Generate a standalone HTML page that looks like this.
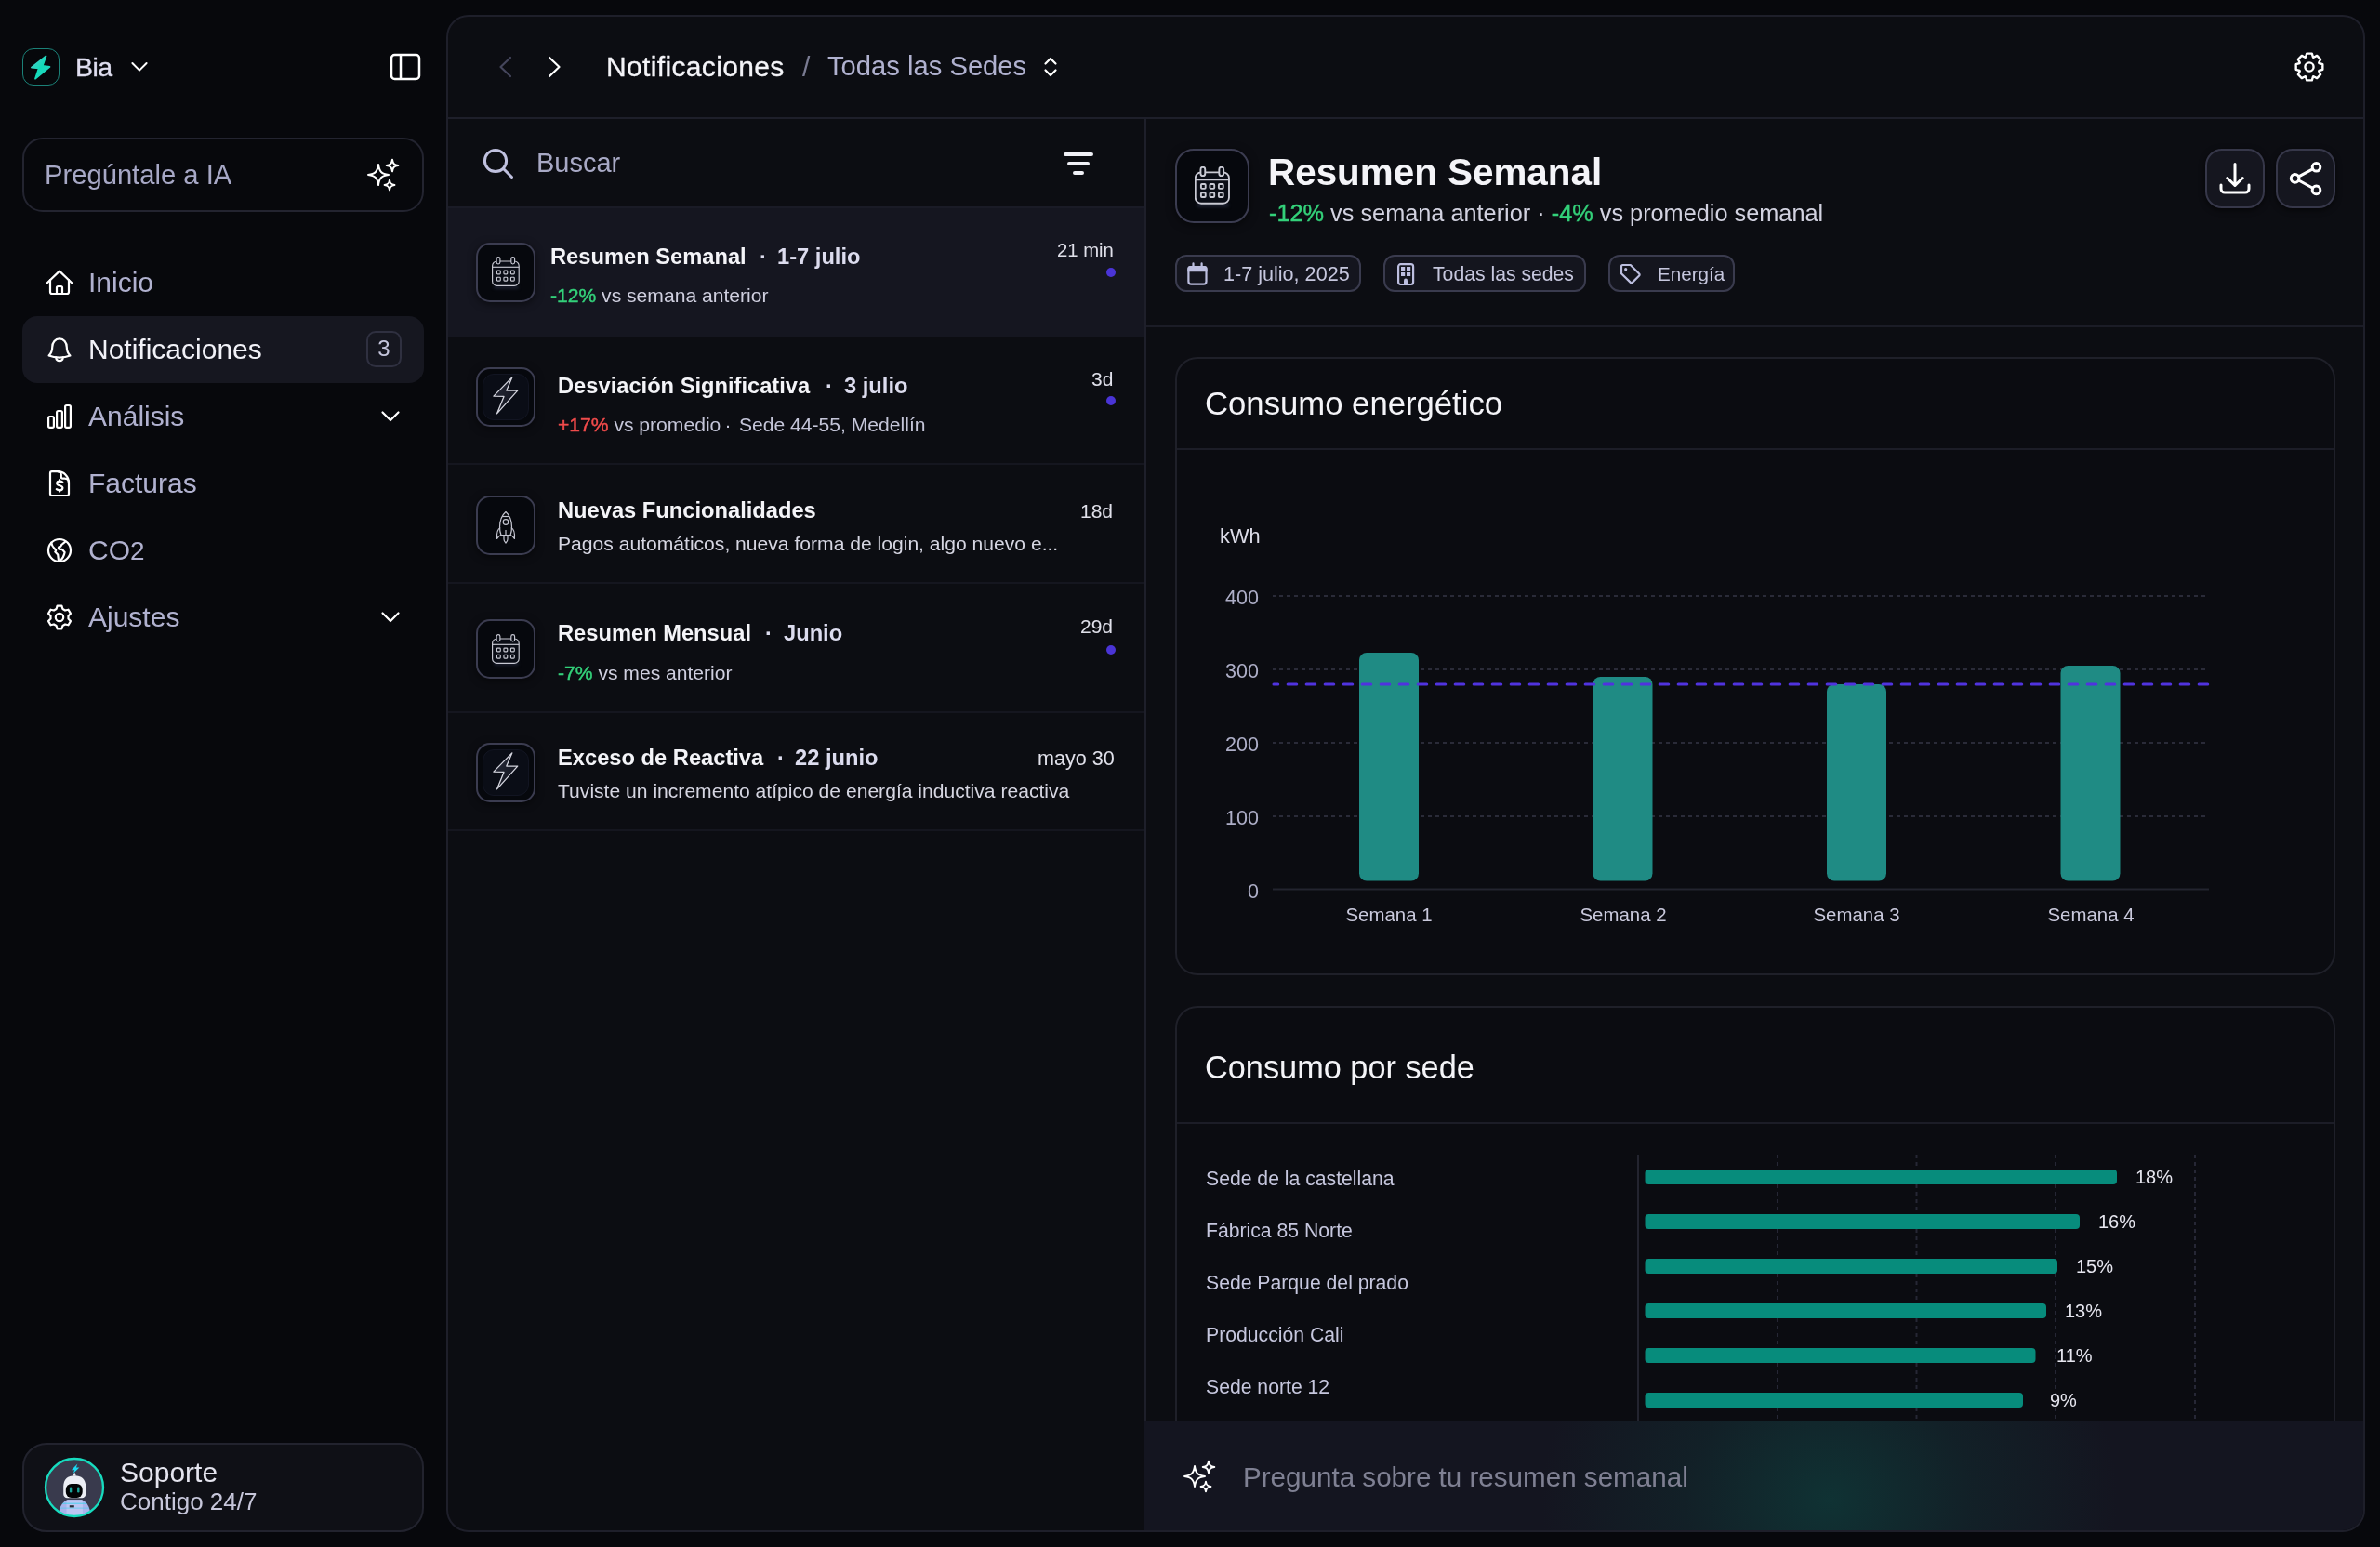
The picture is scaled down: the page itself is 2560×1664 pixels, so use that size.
<!DOCTYPE html>
<html><head><meta charset="utf-8"><style>*{margin:0;padding:0}
html,body{width:2560px;height:1664px;overflow:hidden;background:#07080c;font-family:"Liberation Sans",sans-serif}
.r{position:absolute}
.t{position:absolute;white-space:nowrap;will-change:transform}
.pc{-webkit-text-stroke:0.45px currentColor}
#panel{position:absolute;left:480px;top:16px;width:2064px;height:1632px;border:2px solid #1e1f2a;border-radius:24px;box-sizing:border-box;background:#0c0d12;overflow:hidden}
#clip{position:absolute;left:0;top:0;width:2560px;height:1664px;clip-path:inset(18px 18px 18px 482px round 22px)}
</style></head>
<body>
<div class="r" style="left:24px;top:52px;width:40px;height:40px;border:1.6px solid #1b8178;border-radius:12px;box-sizing:border-box;background:#06080b"></div>
<svg class="r" style="left:24px;top:52px;" width="40" height="40" viewBox="0 0 40 40" fill="none"><defs><linearGradient id="lg" x1="0" y1="0" x2="1" y2="1"><stop offset="0" stop-color="#5cc7cf"/><stop offset="0.5" stop-color="#12dcb9"/><stop offset="1" stop-color="#2ad4c4"/></linearGradient></defs><path d="M25.6 8.2 L9.8 20.6 L17.6 21.4 L13.9 32.8 L29.6 19.9 L21.8 18.9 Z" fill="url(#lg)" stroke="url(#lg)" stroke-width="1.6" stroke-linejoin="round"/></svg>
<div class="t " style="left:80.5px;top:58.07px;font-size:28.5px;line-height:28.5px;color:#dfdef0;letter-spacing:-0.6px;-webkit-text-stroke:0.35px #dfdef0;">Bia</div>
<svg class="r" style="left:136px;top:60px;" width="28" height="24" viewBox="0 0 28 24" fill="none"><path d="M6.4 8 L14 15.6 L21.6 8" stroke="#fff" stroke-width="2" stroke-linecap="round" stroke-linejoin="round"/></svg>
<svg class="r" style="left:416px;top:54px;" width="40" height="36" viewBox="0 0 40 36" fill="none"><rect x="5" y="5" width="30" height="26" rx="3.5" stroke="#fff" stroke-width="2.5"/><path d="M15 5 V31" stroke="#fff" stroke-width="2.5"/></svg>
<div class="r" style="left:24px;top:148px;width:432px;height:80px;border:2px solid #232430;border-radius:22px;box-sizing:border-box"></div>
<div class="t " style="left:48px;top:174.28px;font-size:29.2px;line-height:29.2px;color:#a7a8c6;">Pregúntale a IA</div>
<svg class="r" style="left:388px;top:166px;" width="48" height="44" viewBox="0 0 48 44" fill="none"><g transform="translate(0,0)" stroke="#fff" stroke-width="2" stroke-linejoin="round"><path d="M19 11 C20.078 18.612 22.388 20.922 30 22 C22.388 23.078 20.078 25.388 19 33 C17.922 25.388 15.612 23.078 8 22 C15.612 20.922 17.922 18.612 19 11 Z"/><path d="M34 5.7 C34.6174 10.0596 35.9404 11.3826 40.3 12 C35.9404 12.6174 34.6174 13.9404 34 18.3 C33.3826 13.9404 32.0596 12.6174 27.7 12 C32.0596 11.3826 33.3826 10.0596 34 5.7 Z"/><path d="M31 27.6 C31.5292 31.3368 32.6632 32.4708 36.4 33 C32.6632 33.5292 31.5292 34.6632 31 38.4 C30.4708 34.6632 29.3368 33.5292 25.6 33 C29.3368 32.4708 30.4708 31.3368 31 27.6 Z"/></g></svg>
<div class="r" style="left:24px;top:340px;width:432px;height:72px;background:#161720;border-radius:16px"></div>
<svg class="r" style="left:48px;top:288px;" width="32" height="32" viewBox="0 0 32 32" fill="none"><g stroke="#fff" stroke-width="2.2" stroke-linecap="round" stroke-linejoin="round"><path d="M2.8 16.2 L16 3.6 L29.2 16.2"/><path d="M6 13 V26 a2 2 0 0 0 2 2 H24 a2 2 0 0 0 2 -2 V13"/><path d="M13 28 V21.5 a1.5 1.5 0 0 1 1.5 -1.5 h3 a1.5 1.5 0 0 1 1.5 1.5 V28"/></g></svg>
<div class="t " style="left:95.3px;top:289.21px;font-size:30px;line-height:30px;color:#b0b1cf;">Inicio</div>
<svg class="r" style="left:48px;top:360px;" width="32" height="32" viewBox="0 0 32 32" fill="none"><g stroke="#fff" stroke-width="2.2" stroke-linecap="round" stroke-linejoin="round"><path d="M8.2 13.5 C8.2 8.5 11.5 4.4 16 4.4 C20.5 4.4 23.8 8.5 23.8 13.5 C23.8 17.5 24.8 19.8 27.4 22.6 C23.5 24.2 19.8 24.6 16 24.6 C12.2 24.6 8.5 24.2 4.6 22.6 C7.2 19.8 8.2 17.5 8.2 13.5 Z"/><path d="M12.2 24.4 C12.4 26.6 14 28.2 16 28.2 C18 28.2 19.6 26.6 19.8 24.4"/></g></svg>
<div class="t " style="left:95.3px;top:361.21px;font-size:30px;line-height:30px;color:#f2f2f8;">Notificaciones</div>
<svg class="r" style="left:48px;top:432px;" width="32" height="32" viewBox="0 0 32 32" fill="none"><g stroke="#fff" stroke-width="2.2" stroke-linejoin="round"><rect x="4.1" y="16" width="5.8" height="11.8" rx="1.6"/><rect x="13.1" y="10" width="5.8" height="17.8" rx="1.6"/><rect x="22.1" y="4" width="5.8" height="23.8" rx="1.6"/></g></svg>
<div class="t " style="left:95.3px;top:433.21px;font-size:30px;line-height:30px;color:#b0b1cf;">Análisis</div>
<svg class="r" style="left:48px;top:504px;" width="32" height="32" viewBox="0 0 32 32" fill="none"><g stroke="#fff" stroke-width="2.2" stroke-linecap="round" stroke-linejoin="round"><path d="M6 5 a1.8 1.8 0 0 1 1.8 -1.8 H14 a11.8 11.8 0 0 1 12 12 V27.2 a1.8 1.8 0 0 1 -1.8 1.8 H7.8 a1.8 1.8 0 0 1 -1.8 -1.8 Z"/><path d="M14.6 3.4 a3.2 3.2 0 0 1 3.2 3.2 V9 a1.6 1.6 0 0 0 1.6 1.6 H21.5 a4.4 4.4 0 0 1 4.4 4.4"/><path d="M19.3 14.6 C18.4 13.9 17.3 13.6 16.2 13.6 C14.4 13.6 13.2 14.5 13.2 15.9 C13.2 18.9 19.4 17.6 19.4 20.8 C19.4 22.3 18 23.3 16.1 23.3 C14.8 23.3 13.6 22.9 12.8 22.2"/><path d="M16.1 12.2 V13.6 M16.1 23.3 V24.7"/></g></svg>
<div class="t " style="left:95.3px;top:505.21px;font-size:30px;line-height:30px;color:#b0b1cf;">Facturas</div>
<svg class="r" style="left:48px;top:576px;" width="32" height="32" viewBox="0 0 32 32" fill="none"><g stroke="#fff" stroke-width="2.2" stroke-linecap="round" stroke-linejoin="round"><circle cx="16" cy="16" r="12"/><path d="M7.2 7.6 C7.6 10 8.6 12 10.4 13.8 L12.2 16 L11.3 17.6 L14.2 20.6 L15 27.2 L16.2 27.6 C19.2 25 21 21.6 21.6 18 L18.6 14.8 L16.2 14.8 C15 14.8 14.4 13.2 15.4 12.2 L17.4 11.6 L18.2 10 C19.6 8.6 21.2 7.6 22.4 6.4"/></g></svg>
<div class="t " style="left:95.3px;top:577.21px;font-size:30px;line-height:30px;color:#b0b1cf;">CO<span style="font-size:0.93em">2</span></div>
<svg class="r" style="left:48px;top:648px;" width="32" height="32" viewBox="0 0 32 32" fill="none"><g stroke="#fff" stroke-width="2.2" stroke-linejoin="round"><path d="M12.56 7.04 L13.60 3.63 L18.40 3.63 L19.44 7.04 L22.04 8.54 L25.51 7.73 L27.91 11.90 L25.48 14.50 L25.48 17.50 L27.91 20.10 L25.51 24.27 L22.04 23.46 L19.44 24.96 L18.40 28.37 L13.60 28.37 L12.56 24.96 L9.96 23.46 L6.49 24.27 L4.09 20.10 L6.52 17.50 L6.52 14.50 L4.09 11.90 L6.49 7.73 L9.96 8.54 Z"/><circle cx="16" cy="16" r="4.2"/></g></svg>
<div class="t " style="left:95.3px;top:649.21px;font-size:30px;line-height:30px;color:#b0b1cf;">Ajustes</div>
<div class="r" style="left:394px;top:356px;width:38px;height:39px;border:2px solid #2f3040;border-radius:10px;box-sizing:border-box"></div>
<div class="t " style="left:413px;transform:translateX(-50%);top:363.18px;font-size:24px;line-height:24px;color:#c4c5dc;">3</div>
<svg class="r" style="left:404px;top:436px;" width="32" height="24" viewBox="0 0 32 24" fill="none"><path d="M7.5 7.5 L16 16 L24.5 7.5" stroke="#fff" stroke-width="2.2" stroke-linecap="round" stroke-linejoin="round"/></svg>
<svg class="r" style="left:404px;top:652px;" width="32" height="24" viewBox="0 0 32 24" fill="none"><path d="M7.5 7.5 L16 16 L24.5 7.5" stroke="#fff" stroke-width="2.2" stroke-linecap="round" stroke-linejoin="round"/></svg>
<div class="r" style="left:24px;top:1552px;width:432px;height:96px;border:2px solid #22232e;border-radius:26px;box-sizing:border-box;background:#0f1016"></div>
<svg class="r" style="left:46px;top:1566px;" width="68" height="68" viewBox="0 0 68 68" fill="none"><defs><clipPath id="rc"><circle cx="34" cy="34" r="30.5"/></clipPath></defs><circle cx="34" cy="34" r="31" fill="#393a4d"/><g clip-path="url(#rc)"><clipPath id="bd"><path d="M16.5 70 C16.5 54 22 48.5 27 47.2 L41.5 47.2 C46.5 48.5 52 54 52 70 Z"/></clipPath><g clip-path="url(#bd)"><rect x="10" y="46" width="48" height="30" fill="#a9b3ec"/><rect x="25.5" y="46.6" width="17.4" height="24" fill="#bcc6f3"/><rect x="10" y="50.6" width="48" height="1.3" fill="#3fd3ee" opacity="0.7"/><rect x="10" y="55.6" width="48" height="1.1" fill="#3fd3ee" opacity="0.55"/></g><rect x="28.8" y="53.2" width="5" height="2.2" fill="#2a2c38"/><path d="M22.2 33 C22.2 25 27 21.3 34.2 21.3 C41.4 21.3 46.2 25 46.2 33 V41 C46.2 43.5 44.5 45.2 42 45.2 H26.4 C23.9 45.2 22.2 43.5 22.2 41 Z" fill="#eceef5"/><rect x="24.8" y="30.1" width="17.9" height="15" rx="6" fill="#020305"/><rect x="28.9" y="33.4" width="2.4" height="6" rx="1.2" fill="#1aa39a"/><rect x="37.1" y="33.4" width="2.4" height="6" rx="1.2" fill="#1aa39a"/><path d="M32.6 21.6 L34.2 17.6 L35.8 21.6 Z" fill="#e8eaf2"/><path d="M37.4 8.6 L30.8 15.2 L34.2 15.2 L32.6 19 L39.4 12.4 L35.9 12.4 Z" fill="#19d8f2"/></g><circle cx="34" cy="34" r="31" stroke="#17dcbf" stroke-width="2.3"/></svg>
<div class="t " style="left:128.5px;top:1568.61px;font-size:30px;line-height:30px;color:#e4e4ee;">Soporte</div>
<div class="t " style="left:128.5px;top:1602.49px;font-size:26px;line-height:26px;color:#c6c6da;">Contigo 24/7</div>

<div id="panel"></div>
<div id="clip">
<svg class="r" style="left:528px;top:52px;" width="32" height="40" viewBox="0 0 32 40" fill="none"><path d="M21 10 L10.5 20 L21 30" stroke="#44455b" stroke-width="2.2" stroke-linecap="round" stroke-linejoin="round"/></svg>
<svg class="r" style="left:580px;top:52px;" width="32" height="40" viewBox="0 0 32 40" fill="none"><path d="M11 10 L21.5 20 L11 30" stroke="#fff" stroke-width="2.2" stroke-linecap="round" stroke-linejoin="round"/></svg>
<div class="t " style="left:651.5px;top:56.61px;font-size:30px;line-height:30px;color:#f4f4f8;letter-spacing:0.35px;-webkit-text-stroke:0.3px #f4f4f8;">Notificaciones</div>
<div class="t " style="left:863px;top:56.61px;font-size:30px;line-height:30px;color:#7a7b92;">/</div>
<div class="t " style="left:890px;top:57.28px;font-size:29.2px;line-height:29.2px;color:#b0b1cf;">Todas las Sedes</div>
<svg class="r" style="left:1118px;top:56px;" width="24" height="32" viewBox="0 0 24 32" fill="none"><path d="M6.5 12.5 L12 7 L17.5 12.5 M6.5 19.5 L12 25 L17.5 19.5" stroke="#fff" stroke-width="2.2" stroke-linecap="round" stroke-linejoin="round"/></svg>
<svg class="r" style="left:2468px;top:56px;" width="32" height="32" viewBox="0 0 32 32" fill="none"><g stroke="#fff" stroke-width="2.4" stroke-linejoin="round"><path d="M11.99 5.54 L13.21 1.67 L18.79 1.67 L20.01 5.54 L20.56 5.77 L24.16 3.90 L28.10 7.84 L26.23 11.44 L26.46 11.99 L30.33 13.21 L30.33 18.79 L26.46 20.01 L26.23 20.56 L28.10 24.16 L24.16 28.10 L20.56 26.23 L20.01 26.46 L18.79 30.33 L13.21 30.33 L11.99 26.46 L11.44 26.23 L7.84 28.10 L3.90 24.16 L5.77 20.56 L5.54 20.01 L1.67 18.79 L1.67 13.21 L5.54 11.99 L5.77 11.44 L3.90 7.84 L7.84 3.90 L11.44 5.77 Z"/><circle cx="16" cy="16" r="4.6"/></g></svg>
<div class="r" style="left:482px;top:126px;width:2060px;height:2px;background:#1e1f2a"></div>
<div class="r" style="left:1231px;top:128px;width:2px;height:1520px;background:#1e1f2a"></div>
<svg class="r" style="left:512px;top:152px;" width="48" height="48" viewBox="0 0 48 48" fill="none"><circle cx="21" cy="21" r="11.6" stroke="#c0c1df" stroke-width="3"/><path d="M29.5 29.5 L38.5 38.5" stroke="#c0c1df" stroke-width="3" stroke-linecap="round"/></svg>
<div class="t " style="left:577px;top:161.15px;font-size:29px;line-height:29px;color:#a8a9c5;">Buscar</div>
<svg class="r" style="left:1140px;top:156px;" width="40" height="40" viewBox="0 0 40 40" fill="none"><path d="M6 10 H34 M10 20 H30 M16 30 H24" stroke="#f0f0f6" stroke-width="4" stroke-linecap="round"/></svg>
<div class="r" style="left:482px;top:222px;width:749px;height:140px;background:#151620"></div>
<div class="r" style="left:482px;top:222px;width:749px;height:2px;background:#1a1b26"></div>
<div class="r" style="left:482px;top:498px;width:749px;height:2px;background:#15161f"></div>
<div class="r" style="left:482px;top:626px;width:749px;height:2px;background:#15161f"></div>
<div class="r" style="left:482px;top:765px;width:749px;height:2px;background:#15161f"></div>
<div class="r" style="left:482px;top:892px;width:749px;height:2px;background:#15161f"></div>
<div class="r" style="left:512px;top:261px;width:64px;height:64px;border:2px solid #3b3c50;border-radius:15px;box-sizing:border-box;background:#06080d;box-shadow:0 2px 8px rgba(0,0,0,0.5)"></div>
<div class="r" style="left:530.5px;top:306.90000000000003px;width:27px;height:4.2px;background:#171b2a;border-radius:3px;filter:blur(1.6px)"></div>
<svg class="r" style="left:529px;top:276.3px;" width="30" height="32.0" viewBox="0 0 30 32" fill="none"><g stroke="#c9cad4" stroke-width="1.15" stroke-linejoin="round"><rect x="0.6" y="5" width="28.6" height="26.4" rx="5" fill="#0a0d16"/><path d="M0.6 11.3 H29.2"/><rect x="5.1" y="0.6" width="3.8" height="7.4" rx="1.9" fill="#0a0d16"/><rect x="20.8" y="0.6" width="3.8" height="7.4" rx="1.9" fill="#0a0d16"/><rect x="5.45" y="15.05" width="3.8" height="3.8" rx="0.8"/><rect x="12.95" y="15.05" width="3.8" height="3.8" rx="0.8"/><rect x="20.45" y="15.05" width="3.8" height="3.8" rx="0.8"/><rect x="5.45" y="22.25" width="3.8" height="3.8" rx="0.8"/><rect x="12.95" y="22.25" width="3.8" height="3.8" rx="0.8"/><rect x="20.45" y="22.25" width="3.8" height="3.8" rx="0.8"/></g></svg>
<div class="t " style="left:592px;top:265.14px;font-size:23.7px;line-height:23.7px;color:#f4f4f8;font-weight:700;">Resumen Semanal</div>
<div class="t " style="left:820.7px;transform:translateX(-50%);top:265.14px;font-size:23.7px;line-height:23.7px;color:#dcdcee;font-weight:700;">·</div>
<div class="t " style="left:836px;top:265.14px;font-size:23.7px;line-height:23.7px;color:#dcdcee;font-weight:700;">1-7 julio</div>
<div class="t " style="left:592px;top:306.94px;font-size:21.1px;line-height:21.1px;color:#cfcfdf;"><span class="pc" style="color:#34d17a">-12%</span> vs semana anterior</div>
<div class="t " style="right:1362.5px;top:259.42px;font-size:20.3px;line-height:20.3px;color:#e0e0ea;">21 min</div>
<div class="r" style="left:1190px;top:288px;width:10px;height:10px;border-radius:50%;background:#4a34d6"></div>
<div class="r" style="left:512px;top:395px;width:64px;height:64px;border:2px solid #3b3c50;border-radius:15px;box-sizing:border-box;background:#06080d;box-shadow:0 2px 8px rgba(0,0,0,0.5)"></div>
<div class="r" style="left:519px;top:402px;width:50px;height:50px;border-radius:12px;background:#0a0d16;border:1px solid #121522;box-sizing:border-box"></div>
<svg class="r" style="left:528px;top:404px;" width="32" height="44" viewBox="0 0 32 44" fill="none"><defs><linearGradient id="bg2" x1="0" y1="0" x2="1" y2="1"><stop offset="0" stop-color="#2a2d3c"/><stop offset="1" stop-color="#0d0f18"/></linearGradient></defs><path d="M22.8 1.9 L2.9 22.1 L14 22.4 L6.5 40.9 L28.7 16.1 L16.8 16 Z" fill="url(#bg2)" stroke="#d4d5de" stroke-width="1.3" stroke-linejoin="round"/></svg>
<div class="t " style="left:600px;top:403.94px;font-size:23.7px;line-height:23.7px;color:#f4f4f8;font-weight:700;">Desviación Significativa</div>
<div class="t " style="left:892.4px;transform:translateX(-50%);top:403.94px;font-size:23.7px;line-height:23.7px;color:#dcdcee;font-weight:700;">·</div>
<div class="t " style="left:908px;top:403.94px;font-size:23.7px;line-height:23.7px;color:#dcdcee;font-weight:700;">3 julio</div>
<div class="t " style="left:600px;top:446.14px;font-size:21.1px;line-height:21.1px;color:#c4c5d8;"><span class="pc" style="color:#f04b4b">+17%</span> vs promedio</div>
<div class="t " style="left:782.5px;transform:translateX(-50%);top:446.14px;font-size:21.1px;line-height:21.1px;color:#c4c5d8;">·</div>
<div class="t " style="left:794.5px;top:446.14px;font-size:21.1px;line-height:21.1px;color:#c4c5d8;">Sede 44-55, Medellín</div>
<div class="t " style="right:1362.5px;top:397.22px;font-size:21px;line-height:21px;color:#e0e0ea;">3d</div>
<div class="r" style="left:1190px;top:426px;width:10px;height:10px;border-radius:50%;background:#4a34d6"></div>
<div class="r" style="left:512px;top:533px;width:64px;height:64px;border:2px solid #3b3c50;border-radius:15px;box-sizing:border-box;background:#06080d;box-shadow:0 2px 8px rgba(0,0,0,0.5)"></div>
<svg class="r" style="left:532px;top:549px;" width="24" height="36" viewBox="0 0 24 36" fill="none"><g stroke="#c4c5d0" stroke-width="1.2" stroke-linejoin="round" fill="none"><path d="M12 1.5 C8 5 5.5 11 5.5 18 C5.5 21.5 6 24 7 26.5 H17 C18 24 18.5 21.5 18.5 18 C18.5 11 16 5 12 1.5 Z"/><path d="M8.2 6.5 H15.8"/><circle cx="12" cy="12.5" r="2.8"/><path d="M6.2 18.5 C3 20 2 23 2.6 30.5 C4 28 5.5 26.8 7.2 26.4"/><path d="M17.8 18.5 C21 20 22 23 21.4 30.5 C20 28 18.5 26.8 16.8 26.4"/><path d="M10 26.5 V31 C10 32.5 11 34 12 35 C13 34 14 32.5 14 31 V26.5"/><path d="M12 21 V26.5"/></g></svg>
<div class="t " style="left:600px;top:537.74px;font-size:23.7px;line-height:23.7px;color:#f4f4f8;font-weight:700;">Nuevas Funcionalidades</div>
<div class="t " style="left:600px;top:573.54px;font-size:21.1px;line-height:21.1px;color:#d6d6e2;">Pagos automáticos, nueva forma de login, algo nuevo e...</div>
<div class="t " style="right:1362.5px;top:539.22px;font-size:21px;line-height:21px;color:#e0e0ea;">18d</div>
<div class="r" style="left:512px;top:666px;width:64px;height:64px;border:2px solid #3b3c50;border-radius:15px;box-sizing:border-box;background:#06080d;box-shadow:0 2px 8px rgba(0,0,0,0.5)"></div>
<div class="r" style="left:530.5px;top:712.1px;width:27px;height:4.2px;background:#171b2a;border-radius:3px;filter:blur(1.6px)"></div>
<svg class="r" style="left:529px;top:681.5px;" width="30" height="32.0" viewBox="0 0 30 32" fill="none"><g stroke="#c9cad4" stroke-width="1.15" stroke-linejoin="round"><rect x="0.6" y="5" width="28.6" height="26.4" rx="5" fill="#0a0d16"/><path d="M0.6 11.3 H29.2"/><rect x="5.1" y="0.6" width="3.8" height="7.4" rx="1.9" fill="#0a0d16"/><rect x="20.8" y="0.6" width="3.8" height="7.4" rx="1.9" fill="#0a0d16"/><rect x="5.45" y="15.05" width="3.8" height="3.8" rx="0.8"/><rect x="12.95" y="15.05" width="3.8" height="3.8" rx="0.8"/><rect x="20.45" y="15.05" width="3.8" height="3.8" rx="0.8"/><rect x="5.45" y="22.25" width="3.8" height="3.8" rx="0.8"/><rect x="12.95" y="22.25" width="3.8" height="3.8" rx="0.8"/><rect x="20.45" y="22.25" width="3.8" height="3.8" rx="0.8"/></g></svg>
<div class="t " style="left:600px;top:670.44px;font-size:23.7px;line-height:23.7px;color:#f4f4f8;font-weight:700;">Resumen Mensual</div>
<div class="t " style="left:827px;transform:translateX(-50%);top:670.44px;font-size:23.7px;line-height:23.7px;color:#dcdcee;font-weight:700;">·</div>
<div class="t " style="left:842.5px;top:670.44px;font-size:23.7px;line-height:23.7px;color:#dcdcee;font-weight:700;">Junio</div>
<div class="t " style="left:600px;top:712.84px;font-size:21.1px;line-height:21.1px;color:#cfcfdf;"><span class="pc" style="color:#34d17a">-7%</span> vs mes anterior</div>
<div class="t " style="right:1362.5px;top:663.22px;font-size:21px;line-height:21px;color:#e0e0ea;">29d</div>
<div class="r" style="left:1190px;top:693.5px;width:10px;height:10px;border-radius:50%;background:#4a34d6"></div>
<div class="r" style="left:512px;top:799px;width:64px;height:64px;border:2px solid #3b3c50;border-radius:15px;box-sizing:border-box;background:#06080d;box-shadow:0 2px 8px rgba(0,0,0,0.5)"></div>
<div class="r" style="left:519px;top:806px;width:50px;height:50px;border-radius:12px;background:#0a0d16;border:1px solid #121522;box-sizing:border-box"></div>
<svg class="r" style="left:528px;top:808px;" width="32" height="44" viewBox="0 0 32 44" fill="none"><defs><linearGradient id="bg2" x1="0" y1="0" x2="1" y2="1"><stop offset="0" stop-color="#2a2d3c"/><stop offset="1" stop-color="#0d0f18"/></linearGradient></defs><path d="M22.8 1.9 L2.9 22.1 L14 22.4 L6.5 40.9 L28.7 16.1 L16.8 16 Z" fill="url(#bg2)" stroke="#d4d5de" stroke-width="1.3" stroke-linejoin="round"/></svg>
<div class="t " style="left:600px;top:803.94px;font-size:23.7px;line-height:23.7px;color:#f4f4f8;font-weight:700;">Exceso de Reactiva</div>
<div class="t " style="left:839.7px;transform:translateX(-50%);top:803.94px;font-size:23.7px;line-height:23.7px;color:#dcdcee;font-weight:700;">·</div>
<div class="t " style="left:855px;top:803.94px;font-size:23.7px;line-height:23.7px;color:#dcdcee;font-weight:700;">22 junio</div>
<div class="t " style="left:600px;top:839.54px;font-size:21.1px;line-height:21.1px;color:#d6d6e2;">Tuviste un incremento atípico de energía inductiva reactiva</div>
<div class="t " style="right:1361.5px;top:805.22px;font-size:21.6px;line-height:21.6px;color:#e0e0ea;">mayo 30</div>
<div class="r" style="left:1264px;top:160px;width:80px;height:80px;border:2px solid #3b3c50;border-radius:20px;box-sizing:border-box;background:#06080d;box-shadow:0 2px 10px rgba(0,0,0,0.5)"></div>
<div class="r" style="left:1286.5px;top:217.76px;width:35px;height:5.32px;background:#171b2a;border-radius:3px;filter:blur(1.6px)"></div>
<svg class="r" style="left:1285px;top:179px;" width="38" height="40.53333333333333" viewBox="0 0 30 32" fill="none"><g stroke="#c9cad4" stroke-width="1.5" stroke-linejoin="round"><rect x="0.6" y="5" width="28.6" height="26.4" rx="5" fill="#0a0d16"/><path d="M0.6 11.3 H29.2"/><rect x="5.1" y="0.6" width="3.8" height="7.4" rx="1.9" fill="#0a0d16"/><rect x="20.8" y="0.6" width="3.8" height="7.4" rx="1.9" fill="#0a0d16"/><rect x="5.45" y="15.05" width="3.8" height="3.8" rx="0.8"/><rect x="12.95" y="15.05" width="3.8" height="3.8" rx="0.8"/><rect x="20.45" y="15.05" width="3.8" height="3.8" rx="0.8"/><rect x="5.45" y="22.25" width="3.8" height="3.8" rx="0.8"/><rect x="12.95" y="22.25" width="3.8" height="3.8" rx="0.8"/><rect x="20.45" y="22.25" width="3.8" height="3.8" rx="0.8"/></g></svg>
<div class="t " style="left:1364px;top:164.60px;font-size:40.4px;line-height:40.4px;color:#f4f4f8;font-weight:700;">Resumen Semanal</div>
<div class="t " style="left:1364.5px;top:216.58px;font-size:25.3px;line-height:25.3px;color:#d2d2e0;"><span class="pc" style="color:#34d17a">-12%</span> vs semana anterior · <span class="pc" style="color:#34d17a">-4%</span> vs promedio semanal</div>
<div class="r" style="left:2372px;top:160px;width:64px;height:64px;border:2px solid #363749;border-radius:18px;box-sizing:border-box;background:#15161f;box-shadow:0 2px 6px rgba(0,0,0,0.6)"></div>
<div class="r" style="left:2448px;top:160px;width:64px;height:64px;border:2px solid #363749;border-radius:18px;box-sizing:border-box;background:#15161f;box-shadow:0 2px 6px rgba(0,0,0,0.6)"></div>
<svg class="r" style="left:2372px;top:160px;" width="64" height="64" viewBox="0 0 64 64" fill="none"><g stroke="#fff" stroke-width="3" stroke-linecap="round" stroke-linejoin="round"><path d="M32 16.5 V39.5 M23.8 31.5 L32 39.5 L40.2 31.5"/><path d="M17 39 V43 a4 4 0 0 0 4 4 H43 a4 4 0 0 0 4 -4 V39"/></g></svg>
<svg class="r" style="left:2448px;top:160px;" width="64" height="64" viewBox="0 0 64 64" fill="none"><g stroke="#fff" stroke-width="3" stroke-linecap="round"><circle cx="43.5" cy="19.8" r="4.3"/><circle cx="20.6" cy="31.9" r="4.3"/><circle cx="43.5" cy="44.4" r="4.3"/><path d="M24.6 29.8 L39.6 21.9 M24.6 34 L39.6 42.3"/></g></svg>
<div class="r" style="left:1264px;top:274px;width:200px;height:40px;border:2px solid #3a3b4e;border-radius:12px;box-sizing:border-box;background:#14151e"></div>
<div class="t " style="left:1316px;top:284.02px;font-size:21.6px;line-height:21.6px;color:#c6c7de;">1-7 julio, 2025</div>
<div class="r" style="left:1488px;top:274px;width:218px;height:40px;border:2px solid #3a3b4e;border-radius:12px;box-sizing:border-box;background:#14151e"></div>
<div class="t " style="left:1540.5px;top:284.35px;font-size:21.2px;line-height:21.2px;color:#c6c7de;">Todas las sedes</div>
<div class="r" style="left:1730px;top:274px;width:136px;height:40px;border:2px solid #3a3b4e;border-radius:12px;box-sizing:border-box;background:#14151e"></div>
<div class="t " style="left:1783px;top:284.86px;font-size:20.6px;line-height:20.6px;color:#c6c7de;">Energía</div>
<svg class="r" style="left:1274px;top:280px;" width="28" height="30" viewBox="0 0 28 30" fill="none"><g stroke="#bdbfe0" stroke-width="2.2" stroke-linejoin="round"><rect x="4.4" y="7.2" width="19.1" height="18.5" rx="3"/><path d="M9.5 3.4 V6.4 M18.6 3.4 V6.4" stroke-linecap="round"/></g><path d="M3.3 12.3 V9.1 a3 3 0 0 1 3 -3 H21.6 a3 3 0 0 1 3 3 V12.3 Z" fill="#bdbfe0"/></svg>
<svg class="r" style="left:1500px;top:280px;" width="24" height="30" viewBox="0 0 24 30" fill="none"><g stroke="#bdbfe0" stroke-width="2.2" stroke-linejoin="round"><rect x="4.1" y="4.2" width="16" height="21.8" rx="2.5"/></g><g fill="#bdbfe0"><rect x="7" y="7" width="4.2" height="4"/><rect x="13" y="7" width="4.2" height="4"/><rect x="7" y="13" width="4.2" height="4"/><rect x="13" y="13" width="4.2" height="4"/><path d="M10 26 V21.6 a2 2 0 0 1 4 0 V26 Z"/></g></svg>
<svg class="r" style="left:1740px;top:280px;" width="28" height="30" viewBox="0 0 28 30" fill="none"><g stroke="#bdbfe0" stroke-width="2.2" stroke-linejoin="round"><path d="M4 6.4 a1.4 1.4 0 0 1 1.4 -1.4 H13.8 L23.2 14.6 a1.3 1.3 0 0 1 0 1.9 L15.8 23.9 a1.3 1.3 0 0 1 -1.9 0 L4 14.2 Z"/></g><circle cx="8.7" cy="9.7" r="1.6" fill="#bdbfe0"/></svg>
<div class="r" style="left:1233px;top:350px;width:1309px;height:2px;background:#1b1c26"></div>
<div class="r" style="left:1264px;top:384px;width:1248px;height:665px;border:2px solid #1f2029;border-radius:24px;box-sizing:border-box;background:#0b0c11"></div>
<div class="r" style="left:1266px;top:482px;width:1244px;height:2px;background:#1c1d27"></div>
<div class="t " style="left:1296px;top:416.63px;font-size:34.7px;line-height:34.7px;color:#f4f4f8;">Consumo energético</div>
<div class="t " style="left:1312px;top:565.55px;font-size:21.8px;line-height:21.8px;color:#dcdce8;">kWh</div>
<div class="t " style="right:1206px;top:633.30px;font-size:21.5px;line-height:21.5px;color:#aeafc8;">400</div>
<div class="t " style="right:1206px;top:712.30px;font-size:21.5px;line-height:21.5px;color:#aeafc8;">300</div>
<div class="t " style="right:1206px;top:791.30px;font-size:21.5px;line-height:21.5px;color:#aeafc8;">200</div>
<div class="t " style="right:1206px;top:870.30px;font-size:21.5px;line-height:21.5px;color:#aeafc8;">100</div>
<div class="t " style="right:1206px;top:949.30px;font-size:21.5px;line-height:21.5px;color:#aeafc8;">0</div>
<svg class="r" style="left:0;top:0" width="2560" height="1664" viewBox="0 0 2560 1664"><path d="M1369 641 H2376" stroke="#2a2b38" stroke-width="2" stroke-dasharray="4 4" stroke-dashoffset="1"/><path d="M1369 720 H2376" stroke="#2a2b38" stroke-width="2" stroke-dasharray="4 4" stroke-dashoffset="1"/><path d="M1369 799 H2376" stroke="#2a2b38" stroke-width="2" stroke-dasharray="4 4" stroke-dashoffset="1"/><path d="M1369 878 H2376" stroke="#2a2b38" stroke-width="2" stroke-dasharray="4 4" stroke-dashoffset="1"/><path d="M1369 956.5 H2376" stroke="#23242f" stroke-width="2"/><rect x="1462" y="702" width="64" height="245.5" rx="8" fill="#1f8b84"/><rect x="1713.5" y="728" width="64" height="219.5" rx="8" fill="#1f8b84"/><rect x="1965" y="736" width="64" height="211.5" rx="8" fill="#1f8b84"/><rect x="2216.5" y="716" width="64" height="231.5" rx="8" fill="#1f8b84"/><path d="M1370 736 H2376" stroke="#5033df" stroke-width="3.1" stroke-dasharray="9.5 10.5" stroke-dashoffset="4.8" stroke-linecap="round"/></svg>
<div class="t " style="left:1494px;transform:translateX(-50%);top:973.73px;font-size:20.4px;line-height:20.4px;color:#c9c9dc;">Semana 1</div>
<div class="t " style="left:1745.5px;transform:translateX(-50%);top:973.73px;font-size:20.4px;line-height:20.4px;color:#c9c9dc;">Semana 2</div>
<div class="t " style="left:1997px;transform:translateX(-50%);top:973.73px;font-size:20.4px;line-height:20.4px;color:#c9c9dc;">Semana 3</div>
<div class="t " style="left:2248.5px;transform:translateX(-50%);top:973.73px;font-size:20.4px;line-height:20.4px;color:#c9c9dc;">Semana 4</div>
<div class="r" style="left:1264px;top:1082px;width:1248px;height:700px;border:2px solid #1f2029;border-radius:24px;box-sizing:border-box;background:#0b0c11"></div>
<div class="r" style="left:1266px;top:1207px;width:1244px;height:2px;background:#1c1d27"></div>
<div class="t " style="left:1296px;top:1130.97px;font-size:34.3px;line-height:34.3px;color:#f4f4f8;">Consumo por sede</div>
<div class="t " style="left:1296.5px;top:1256.55px;font-size:21.2px;line-height:21.2px;color:#c6c7de;">Sede de la castellana</div>
<div class="t " style="left:1296.5px;top:1312.55px;font-size:21.2px;line-height:21.2px;color:#c6c7de;">Fábrica 85 Norte</div>
<div class="t " style="left:1296.5px;top:1368.55px;font-size:21.2px;line-height:21.2px;color:#c6c7de;">Sede Parque del prado</div>
<div class="t " style="left:1296.5px;top:1424.55px;font-size:21.2px;line-height:21.2px;color:#c6c7de;">Producción Cali</div>
<div class="t " style="left:1296.5px;top:1480.55px;font-size:21.2px;line-height:21.2px;color:#c6c7de;">Sede norte 12</div>
<svg class="r" style="left:0;top:0" width="2560" height="1664" viewBox="0 0 2560 1664"><path d="M1762 1242 V1530" stroke="#23242f" stroke-width="2"/><path d="M1912 1242 V1530" stroke="#262735" stroke-width="2" stroke-dasharray="4 4"/><path d="M2061.5 1242 V1530" stroke="#262735" stroke-width="2" stroke-dasharray="4 4"/><path d="M2211 1242 V1530" stroke="#262735" stroke-width="2" stroke-dasharray="4 4"/><path d="M2361 1242 V1530" stroke="#262735" stroke-width="2" stroke-dasharray="4 4"/><rect x="1769.5" y="1258" width="507.5" height="16" rx="4" fill="#078c7c"/><rect x="1769.5" y="1306" width="467.5" height="16" rx="4" fill="#078c7c"/><rect x="1769.5" y="1354" width="443.5" height="16" rx="4" fill="#078c7c"/><rect x="1769.5" y="1402" width="431.5" height="16" rx="4" fill="#078c7c"/><rect x="1769.5" y="1450" width="420.0" height="16" rx="4" fill="#078c7c"/><rect x="1769.5" y="1498" width="406.5" height="16" rx="4" fill="#078c7c"/></svg>
<div class="t " style="left:2296.5px;top:1256.07px;font-size:20px;line-height:20px;color:#e6e6ef;">18%</div>
<div class="t " style="left:2256.5px;top:1304.07px;font-size:20px;line-height:20px;color:#e6e6ef;">16%</div>
<div class="t " style="left:2232.8px;top:1352.07px;font-size:20px;line-height:20px;color:#e6e6ef;">15%</div>
<div class="t " style="left:2220.6px;top:1400.07px;font-size:20px;line-height:20px;color:#e6e6ef;">13%</div>
<div class="t " style="left:2211.7px;top:1448.07px;font-size:20px;line-height:20px;color:#e6e6ef;">11%</div>
<div class="t " style="left:2205px;top:1496.07px;font-size:20px;line-height:20px;color:#e6e6ef;">9%</div>
<div class="r" style="left:1231px;top:1528px;width:1311px;height:118px;background:#141520;border-bottom-right-radius:22px;overflow:hidden"></div>
<div class="r" style="left:1231px;top:1528px;width:1311px;height:118px;background:radial-gradient(ellipse 310px 270px at 737px 85px, rgba(12,74,68,0.55) 0%, rgba(14,58,56,0.3) 50%, rgba(20,21,32,0) 100%);border-bottom-right-radius:22px"></div>
<svg class="r" style="left:1266px;top:1566px;" width="48" height="44" viewBox="0 0 48 44" fill="none"><g transform="translate(0,0)" stroke="#fff" stroke-width="1.9" stroke-linejoin="round"><path d="M19 11 C20.078 18.612 22.388 20.922 30 22 C22.388 23.078 20.078 25.388 19 33 C17.922 25.388 15.612 23.078 8 22 C15.612 20.922 17.922 18.612 19 11 Z"/><path d="M34 5.7 C34.6174 10.0596 35.9404 11.3826 40.3 12 C35.9404 12.6174 34.6174 13.9404 34 18.3 C33.3826 13.9404 32.0596 12.6174 27.7 12 C32.0596 11.3826 33.3826 10.0596 34 5.7 Z"/><path d="M31 27.6 C31.5292 31.3368 32.6632 32.4708 36.4 33 C32.6632 33.5292 31.5292 34.6632 31 38.4 C30.4708 34.6632 29.3368 33.5292 25.6 33 C29.3368 32.4708 30.4708 31.3368 31 27.6 Z"/></g></svg>
<div class="t " style="left:1336.5px;top:1573.94px;font-size:29.6px;line-height:29.6px;color:#7f8093;">Pregunta sobre tu resumen semanal</div>

</div>
</body></html>
